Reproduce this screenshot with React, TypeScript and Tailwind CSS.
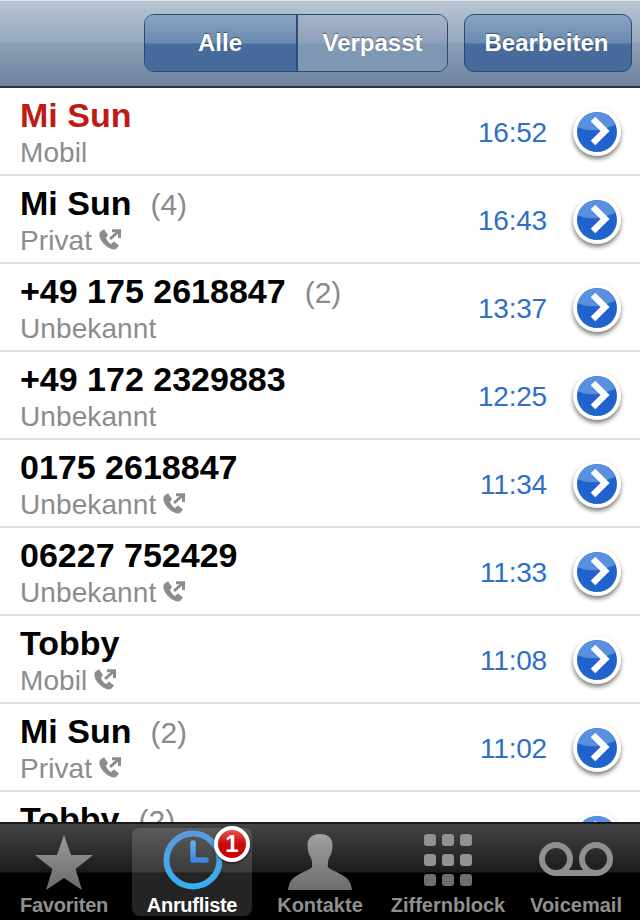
const rows = [
  { name: "Mi Sun", count: "", sub: "Mobil", time: "16:52", red: true, icon: false },
  { name: "Mi Sun", count: "(4)", sub: "Privat", time: "16:43", icon: true },
  { name: "+49 175 2618847", count: "(2)", sub: "Unbekannt", time: "13:37", icon: false },
  { name: "+49 172 2329883", count: "", sub: "Unbekannt", time: "12:25", icon: false },
  { name: "0175 2618847", count: "", sub: "Unbekannt", time: "11:34", icon: true },
  { name: "06227 752429", count: "", sub: "Unbekannt", time: "11:33", icon: true },
  { name: "Tobby", count: "", sub: "Mobil", time: "11:08", icon: true },
  { name: "Mi Sun", count: "(2)", sub: "Privat", time: "11:02", icon: true },
  { name: "Tobby", count: "(2)", sub: "", time: "", icon: false },
];

function OutCall() {
  return (
    <svg width="23" height="22" viewBox="0 0 23 22" className="ml-[7px] mt-[-2px]">
      <path d="M1 3 L5 0.3 L9 6 L7 9 C8 12 10 14 12 15 L15 12.5 L20 16.5 L17 20 C14 21.5 9 19 5 15 C1 11 -0.5 6 1 3 Z" fill="#8c8c8c" />
      <path d="M11 10 L19.5 2.5 M13 1.8 H20.5 V9" fill="none" stroke="#8c8c8c" strokeWidth="3" />
    </svg>
  );
}

function Disclosure() {
  return (
    <div className="relative flex h-[48px] w-[48px] shrink-0 items-center justify-center rounded-full bg-white shadow-[0_3px_4px_rgba(0,0,0,0.5)]">
      <div className="relative h-[40px] w-[40px] overflow-hidden rounded-full bg-[#2163cd]">
        <div className="absolute -left-[10px] -top-[20px] h-[38px] w-[60px] rotate-[-8deg] rounded-[50%] bg-[#5a90e0]" />
        <svg width="40" height="40" viewBox="0 0 40 40" className="absolute left-0 top-0">
          <path d="M16 7 L28 19 L16 31" fill="none" stroke="#fff" strokeWidth="6.5" />
        </svg>
      </div>
    </div>
  );
}

function Row({ r }: { r: (typeof rows)[number] }) {
  return (
    <div className="flex h-[88px] shrink-0 items-start border-b-2 border-[#e0e0e0] pl-[20px] pr-[19px]">
      <div className="flex min-w-0 flex-1 flex-col pt-[6px]">
        <div className={`flex h-[43px] items-baseline text-[34px] font-bold leading-[42px] ${r.red ? "text-[#c01a17]" : "text-black"}`}>
          <span>{r.name}</span>
          {r.count && <span className="ml-[19px] text-[30px] font-normal text-[#8a8a8a]">{r.count}</span>}
        </div>
        <div className="flex h-[32px] items-center text-[28px] leading-[32px] tracking-[0.1px] text-[#8c8c8c]">
          <span>{r.sub}</span>
          {r.icon && <OutCall />}
        </div>
      </div>
      {r.time && <span className="mr-[26px] mt-[29px] text-[28px] leading-[32px] tracking-[-0.2px] text-[#2f6fc6]">{r.time}</span>}
      <div className="mt-[20px]"><Disclosure /></div>
    </div>
  );
}

const navBtn = "flex items-center justify-center text-[24px] font-bold text-white [text-shadow:0_-1px_1px_rgba(0,0,0,0.45)]";

function Tab({ label, active, labelClass, children }: { label: string; active?: boolean; labelClass?: string; children: React.ReactNode }) {
  return (
    <div className={`relative flex h-[88px] flex-col items-center justify-end rounded-[8px] ${active ? "bg-white/[0.14]" : ""}`}>
      <div className="absolute inset-x-0 top-[6px] flex justify-center">{children}</div>
      <span className={`mb-[-1px] text-[20px] font-bold leading-[24px] ${active ? "text-white" : "text-[#8f8f8f]"} ${labelClass ?? ""}`}>{label}</span>
    </div>
  );
}

export default function App() {
  return (
    <div className="flex h-[920px] w-[640px] flex-col overflow-hidden bg-white font-['Liberation_Sans',sans-serif]">
      <div className="flex h-[88px] shrink-0 items-start justify-end gap-[16px] border-b-2 border-[#2d3640] bg-[linear-gradient(#bac7d3_0%,#95a8bc_50%,#8da1b7_50%,#6d829e_100%)] pr-[8px] pt-[14px] shadow-[inset_0_1px_0_#dfe5eb]">
        <div className="flex h-[58px] w-[304px] overflow-hidden rounded-[10px] border border-[#2f4866]">
          <div className={`${navBtn} w-[153px] border-r-2 border-[#2c4d7c] pr-[1px] bg-[linear-gradient(#8aa3c4_0%,#6a8bb0_50%,#466b9c_52%,#466a9b_100%)]`}>Alle</div>
          <div className={`${navBtn} flex-1 bg-[linear-gradient(#a5b4c9_0%,#8ea1b9_50%,#7f98b3_52%,#7e97b2_100%)]`}>Verpasst</div>
        </div>
        <div className={`${navBtn} h-[58px] w-[168px] rounded-[10px] border border-[#2f4866] pr-[3px] bg-[linear-gradient(#8aa3c4_0%,#6a8bb0_50%,#466b9c_52%,#466a9b_100%)]`}>Bearbeiten</div>
      </div>

      <div className="min-h-0 flex-1 overflow-hidden">
        {rows.map((r, i) => <Row key={i} r={r} />)}
      </div>

      <div className="relative grid h-[98px] shrink-0 grid-cols-[repeat(5,120px)] gap-x-[8px] border-t-2 border-[#1a1a1a] bg-black bg-[linear-gradient(#444_0%,#1b1b1b_50%,#000_51%,#000_100%)] px-[4px] pt-[4px]">
        <Tab label="Favoriten" labelClass="tracking-[-0.2px]">
          <svg width="58" height="56" viewBox="0 0 58 56" className="mt-[1px]">
            <defs><linearGradient id="g" x1="0" y1="0" x2="0" y2="1"><stop offset="0" stopColor="#9a9a9a" /><stop offset="1" stopColor="#6a6a6a" /></linearGradient></defs>
            <path d="M29 0 L36 20 L58 20 L40.5 34 L47 55 L29 43 L11 55 L17.5 34 L0 20 L22 20 Z" fill="url(#g)" />
          </svg>
        </Tab>
        <Tab label="Anrufliste" active labelClass="tracking-[-0.3px]">
          <svg width="60" height="60" viewBox="0 0 60 60" className="mt-[-4px]">
            <defs>
              <linearGradient id="c" x1="0" y1="0" x2="0" y2="1"><stop offset="0" stopColor="#5a9ade" /><stop offset="1" stopColor="#35b0f2" /></linearGradient>
              <linearGradient id="h" x1="0" y1="0" x2="0" y2="1"><stop offset="0" stopColor="#66acec" /><stop offset="1" stopColor="#3b88e0" /></linearGradient>
            </defs>
            <circle cx="31" cy="30" r="26.5" fill="none" stroke="url(#c)" strokeWidth="6" />
            <path d="M31 13 V30 H44" fill="none" stroke="url(#h)" strokeWidth="5.5" strokeLinecap="round" strokeLinejoin="round" />
          </svg>
          <div className="absolute left-[82px] top-[-8px] flex h-[36px] w-[36px] items-center justify-center rounded-full border-[4px] border-white bg-[linear-gradient(#e8504f_0%,#c60b0b_52%,#d20000_100%)] text-[24px] font-bold leading-none text-white shadow-[0_1px_3px_rgba(0,0,0,0.7)]">1</div>
        </Tab>
        <Tab label="Kontakte">
          <svg width="64" height="56" viewBox="0 0 64 56">
            <defs><linearGradient id="p" x1="0" y1="0" x2="0" y2="1"><stop offset="0" stopColor="#a0a0a0" /><stop offset="1" stopColor="#6d6d6d" /></linearGradient></defs>
            <path d="M32 0 C40 0 44.5 4 44.5 11 C44.5 17 43 21 41 24 C40 27 39.5 30 40 33 C42 36 48 37 54 41 C60 44 63 48 64 56 H0 C1 48 4 44 10 41 C16 37 22 36 24 33 C24.5 30 24 27 23 24 C21 21 19.5 17 19.5 11 C19.5 4 24 0 32 0 Z" fill="url(#p)" />
          </svg>
        </Tab>
        <Tab label="Ziffernblock">
          <div className="grid grid-cols-3 gap-x-[6px] gap-y-[8px]">
            {[0, 1, 2, 3, 4, 5, 6, 7, 8].map((n) => (
              <div key={n} className={`h-[12px] w-[12px] rounded-[3px] ${n < 6 ? "bg-[#929292]" : "bg-[#6f6f6f]"}`} />
            ))}
          </div>
        </Tab>
        <Tab label="Voicemail">
          <svg width="74" height="34" viewBox="0 0 74 34" className="mt-[8px]">
            <circle cx="17" cy="17" r="14" fill="none" stroke="#8f8f8f" strokeWidth="6" />
            <circle cx="57" cy="17" r="14" fill="none" stroke="#8f8f8f" strokeWidth="6" />
            <path d="M17 31 H57" stroke="#8f8f8f" strokeWidth="6" />
          </svg>
        </Tab>
      </div>
    </div>
  );
}
